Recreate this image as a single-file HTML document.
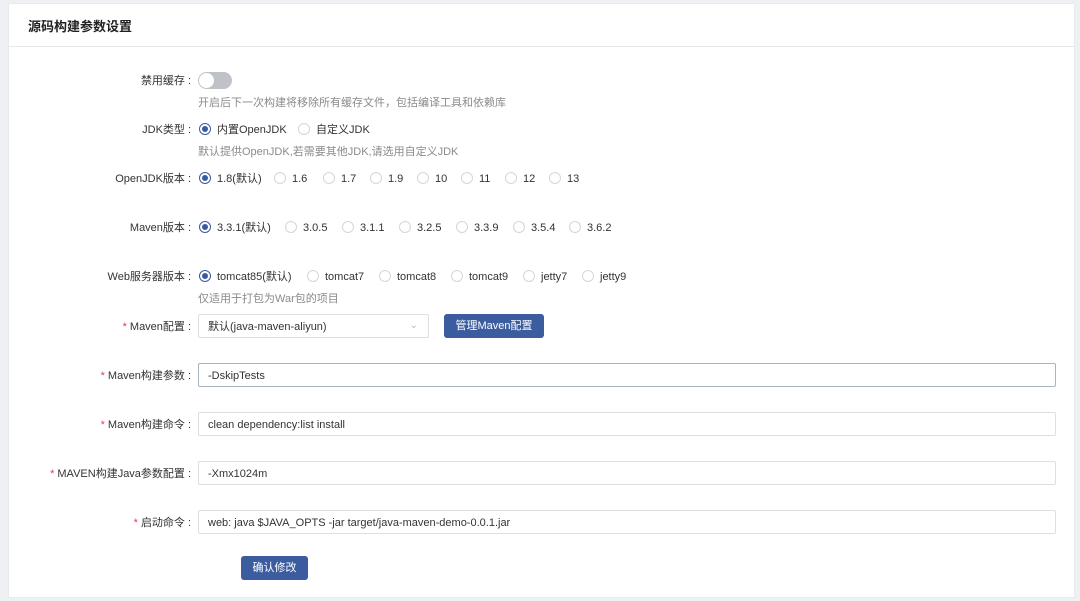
<!DOCTYPE html>
<html><head><meta charset="utf-8"><style>
*{box-sizing:border-box;margin:0;padding:0}
body{width:1080px;height:601px;background:#eef0f4;font-family:"Liberation Sans","Noto Sans CJK SC",sans-serif;font-size:11px;color:#333;position:relative;overflow:hidden}
.card{position:absolute;left:8px;top:3px;width:1067px;height:595px;background:#fff;border:1px solid #e8eaee}
.hd{position:absolute;left:0;top:0;right:0;height:43px;border-bottom:1px solid #e6e8eb}
.title{position:absolute;left:19px;top:14px;font-size:13px;font-weight:bold;color:#222;line-height:18px}
.a,.lab{position:absolute;white-space:nowrap;line-height:14px;height:14px}
.lab{right:889px;text-align:right;color:#333}
.lab i{font-style:normal;margin-left:3px}
.lab b{color:#e0414c;font-weight:normal;margin-right:3px}
.help{color:#8a8a8a}
.r{position:absolute;width:12px;height:12px;border:1px solid #d3d6dc;border-radius:50%;background:#fff}
.r.on{border-color:#3a5aa0}
.r.on:after{content:"";position:absolute;left:2px;top:2px;width:6px;height:6px;border-radius:50%;background:#3a5aa0}
.inp{position:absolute;left:198px;width:858px;height:24px;border:1px solid #dcdfe4;border-radius:2px;padding-left:9px;padding-top:1px;display:flex;align-items:center;color:#333;line-height:14px}
.btn{position:absolute;background:#3b5c9f;color:#fff;border-radius:3px;height:24px;display:flex;align-items:center;justify-content:center;line-height:14px}
</style></head><body>
<div class="card"><div class="hd"><div class="title">源码构建参数设置</div></div></div>

<div class="lab" style="top:74px">禁用缓存<i>:</i></div>
<div class="a" style="left:198px;top:72px;width:34px;height:17px;border-radius:9px;background:#bfc2c7"><div style="position:absolute;left:1px;top:1px;width:15px;height:15px;border-radius:50%;background:#fff"></div></div>
<div class="a help" style="left:198px;top:96px">开启后下一次构建将移除所有缓存文件，包括编译工具和依赖库</div>

<div class="lab" style="top:123px">JDK类型<i>:</i></div>
<div class="r on" style="left:199px;top:123px"></div><div class="a" style="left:217px;top:123px">内置OpenJDK</div>
<div class="r" style="left:298px;top:123px"></div><div class="a" style="left:316px;top:123px">自定义JDK</div>
<div class="a help" style="left:198px;top:145px">默认提供OpenJDK,若需要其他JDK,请选用自定义JDK</div>

<div class="lab" style="top:172px">OpenJDK版本<i>:</i></div>
<div class="r on" style="left:199px;top:172px"></div><div class="a" style="left:217px;top:172px">1.8(默认)</div>
<div class="r" style="left:274px;top:172px"></div><div class="a" style="left:292px;top:172px">1.6</div>
<div class="r" style="left:323px;top:172px"></div><div class="a" style="left:341px;top:172px">1.7</div>
<div class="r" style="left:370px;top:172px"></div><div class="a" style="left:388px;top:172px">1.9</div>
<div class="r" style="left:417px;top:172px"></div><div class="a" style="left:435px;top:172px">10</div>
<div class="r" style="left:461px;top:172px"></div><div class="a" style="left:479px;top:172px">11</div>
<div class="r" style="left:505px;top:172px"></div><div class="a" style="left:523px;top:172px">12</div>
<div class="r" style="left:549px;top:172px"></div><div class="a" style="left:567px;top:172px">13</div>

<div class="lab" style="top:221px">Maven版本<i>:</i></div>
<div class="r on" style="left:199px;top:221px"></div><div class="a" style="left:217px;top:221px">3.3.1(默认)</div>
<div class="r" style="left:285px;top:221px"></div><div class="a" style="left:303px;top:221px">3.0.5</div>
<div class="r" style="left:342px;top:221px"></div><div class="a" style="left:360px;top:221px">3.1.1</div>
<div class="r" style="left:399px;top:221px"></div><div class="a" style="left:417px;top:221px">3.2.5</div>
<div class="r" style="left:456px;top:221px"></div><div class="a" style="left:474px;top:221px">3.3.9</div>
<div class="r" style="left:513px;top:221px"></div><div class="a" style="left:531px;top:221px">3.5.4</div>
<div class="r" style="left:569px;top:221px"></div><div class="a" style="left:587px;top:221px">3.6.2</div>

<div class="lab" style="top:270px">Web服务器版本<i>:</i></div>
<div class="r on" style="left:199px;top:270px"></div><div class="a" style="left:217px;top:270px">tomcat85(默认)</div>
<div class="r" style="left:307px;top:270px"></div><div class="a" style="left:325px;top:270px">tomcat7</div>
<div class="r" style="left:379px;top:270px"></div><div class="a" style="left:397px;top:270px">tomcat8</div>
<div class="r" style="left:451px;top:270px"></div><div class="a" style="left:469px;top:270px">tomcat9</div>
<div class="r" style="left:523px;top:270px"></div><div class="a" style="left:541px;top:270px">jetty7</div>
<div class="r" style="left:582px;top:270px"></div><div class="a" style="left:600px;top:270px">jetty9</div>
<div class="a help" style="left:198px;top:292px">仅适用于打包为War包的项目</div>

<div class="lab" style="top:320px"><b>*</b>Maven配置<i>:</i></div>
<div class="inp" style="top:314px;width:231px">默认(java-maven-aliyun)<span style="position:absolute;right:10px;top:4px;color:#bbb;font-size:10px">&#8964;</span></div>
<div class="btn" style="left:444px;top:314px;width:100px">管理Maven配置</div>

<div class="lab" style="top:369px"><b>*</b>Maven构建参数<i>:</i></div>
<div class="inp" style="top:363px;border-color:#a9b3c4">-DskipTests</div>
<div class="lab" style="top:418px"><b>*</b>Maven构建命令<i>:</i></div>
<div class="inp" style="top:412px">clean dependency:list install</div>
<div class="lab" style="top:467px"><b>*</b>MAVEN构建Java参数配置<i>:</i></div>
<div class="inp" style="top:461px">-Xmx1024m</div>
<div class="lab" style="top:516px"><b>*</b>启动命令<i>:</i></div>
<div class="inp" style="top:510px">web: java $JAVA_OPTS -jar target/java-maven-demo-0.0.1.jar</div>

<div class="btn" style="left:241px;top:556px;width:67px">确认修改</div>
</body></html>
